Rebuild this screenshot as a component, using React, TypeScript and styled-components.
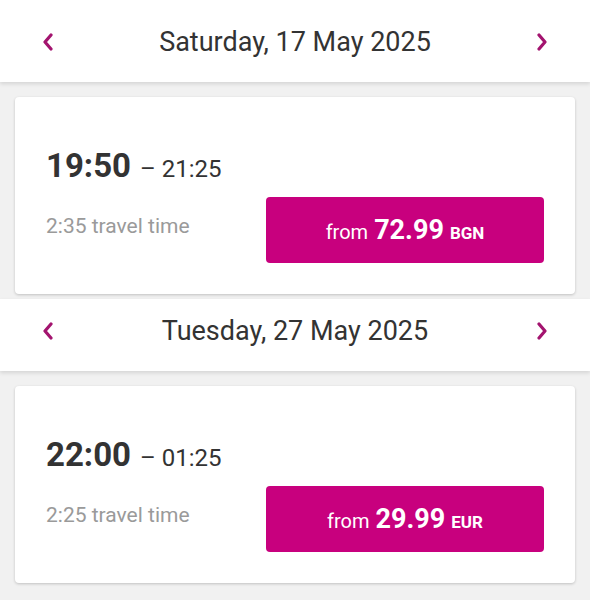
import React from "react";
import styled, { createGlobalStyle } from "styled-components";

const GlobalStyle = createGlobalStyle`
  html, body {
    margin: 0;
    padding: 0;
    background: #f1f1f1;
    font-family: Roboto, "Liberation Sans", Arial, sans-serif;
  }
`;

const Page = styled.div`
  display: flex;
  flex-direction: column;
  width: 590px;
`;

const DateBar = styled.div<{ $first?: boolean }>`
  position: relative;
  z-index: 1;
  display: flex;
  align-items: center;
  justify-content: space-between;
  height: 64px;
  padding: ${(p) => (p.$first ? "10px" : "0")} 28px 8px;
  background: #fff;
  box-shadow: 0 2px 4px rgba(0, 0, 0, 0.12);
  box-sizing: content-box;
`;

const Chevron = styled.button`
  display: flex;
  align-items: center;
  justify-content: center;
  width: 40px;
  height: 40px;
  padding: 0;
  border: none;
  background: none;
  color: #a3146f;
  cursor: pointer;
`;

const DateLabel = styled.div`
  font-size: 27px;
  color: #333;
`;

const CardArea = styled.div<{ $bottom: number }>`
  padding: 15px 15px ${(p) => p.$bottom}px;
`;

const Card = styled.div`
  display: flex;
  flex-direction: column;
  gap: 8px;
  padding: 49px 31px 31px;
  background: #fff;
  border-radius: 4px;
  box-shadow: 0 1px 3px rgba(0, 0, 0, 0.2);
`;

const Times = styled.div`
  display: flex;
  align-items: baseline;
  gap: 9px;
  color: #333;
  line-height: 40px;
`;

const Departure = styled.span`
  font-size: 33px;
  font-weight: 700;
`;

const Arrival = styled.span`
  font-size: 24px;
`;

const BottomRow = styled.div`
  display: flex;
  align-items: center;
  justify-content: space-between;
`;

const Duration = styled.div`
  font-size: 21px;
  color: #9a9a9a;
  margin-bottom: 8px;
`;

const PriceButton = styled.button`
  display: flex;
  align-items: baseline;
  justify-content: center;
  gap: 6px;
  width: 278px;
  height: 66px;
  padding: 17px 0 0;
  border: none;
  border-radius: 4px;
  background: #c8007e;
  color: #fff;
  font-family: inherit;
  cursor: pointer;
`;

const From = styled.span`
  font-size: 20px;
`;

const Amount = styled.span`
  font-size: 27px;
  font-weight: 700;
`;

const Currency = styled.span`
  font-size: 17px;
  font-weight: 700;
`;

const ChevronIcon = ({ dir }: { dir: "left" | "right" }) => (
  <svg width="12" height="18" viewBox="0 0 12 18">
    <path
      d={dir === "left" ? "M9 2 L3 9 L9 16" : "M3 2 L9 9 L3 16"}
      fill="none"
      stroke="currentColor"
      strokeWidth="3.2"
      strokeLinecap="round"
      strokeLinejoin="round"
    />
  </svg>
);

type Flight = {
  date: string;
  dep: string;
  arr: string;
  duration: string;
  price: string;
  currency: string;
};

const flights: Flight[] = [
  {
    date: "Saturday, 17 May 2025",
    dep: "19:50",
    arr: "21:25",
    duration: "2:35",
    price: "72.99",
    currency: "BGN",
  },
  {
    date: "Tuesday, 27 May 2025",
    dep: "22:00",
    arr: "01:25",
    duration: "2:25",
    price: "29.99",
    currency: "EUR",
  },
];

const App = () => {
  return (
    <>
      <GlobalStyle />
      <Page>
        {flights.map((f, i) => (
          <React.Fragment key={f.date}>
            <DateBar $first={i === 0}>
              <Chevron aria-label="Previous day">
                <ChevronIcon dir="left" />
              </Chevron>
              <DateLabel>{f.date}</DateLabel>
              <Chevron aria-label="Next day">
                <ChevronIcon dir="right" />
              </Chevron>
            </DateBar>
            <CardArea $bottom={i === 0 ? 5 : 19}>
              <Card>
                <Times>
                  <Departure>{f.dep}</Departure>
                  <Arrival>– {f.arr}</Arrival>
                </Times>
                <BottomRow>
                  <Duration>{f.duration} travel time</Duration>
                  <PriceButton>
                    <From>from</From>
                    <Amount>{f.price}</Amount>
                    <Currency>{f.currency}</Currency>
                  </PriceButton>
                </BottomRow>
              </Card>
            </CardArea>
          </React.Fragment>
        ))}
      </Page>
    </>
  );
};

export default App;
